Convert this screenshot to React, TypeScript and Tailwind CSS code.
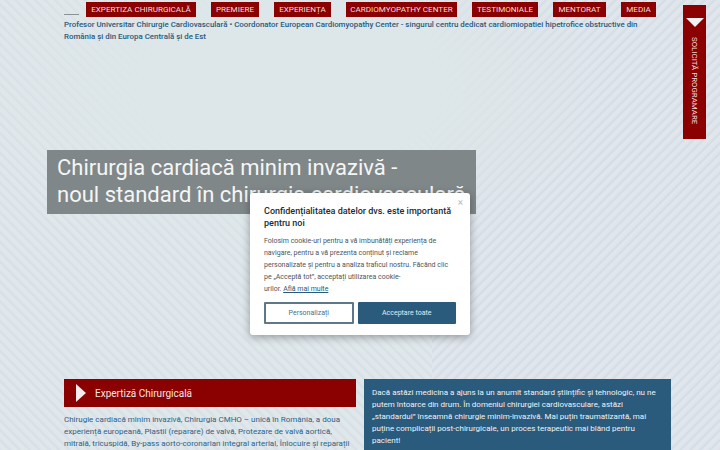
const navItems = [
  { label: "EXPERTIZA CHIRURGICALĂ", width: "w-[110px]" },
  { label: "PREMIERE", width: "w-[48px]" },
  { label: "EXPERIENȚA", width: "w-[57px]" },
  { label: "CARDIOMYOPATHY CENTER", width: "w-[111px]" },
  { label: "TESTIMONIALE", width: "w-[66px]" },
  { label: "MENTORAT", width: "w-[53px]" },
  { label: "MEDIA", width: "w-[35px]" },
];

const App = () => {
  return (
    <div className="relative h-[450px] w-[720px] overflow-hidden bg-[#dde6e9] bg-[radial-gradient(ellipse_320px_170px_at_290px_85px,#dde6e9_45%,transparent_100%),repeating-linear-gradient(45deg,#d5dfe6_0px,#dfe7eb_2px,#e1e8eb_5px,#d5dfe6_7px),repeating-linear-gradient(-45deg,#d3dce5_0px,#dfe5eb_2px,#e1e7ec_5px,#d3dce5_7px)] bg-[length:100%_100%,60%_100%,40%_100%] bg-no-repeat [background-position:left_top,left_top,right_top] font-['Roboto',sans-serif]">
      <header className="pl-[64px] pt-[2px]">
        <div className="flex items-center">
          <div className="mr-[7px] mt-[10px] h-[1px] w-[15px] bg-[#8a9298]" />
          <nav className="flex gap-[15px]">
            {navItems.map((item) => (
              <a
                key={item.label}
                className={`${item.width} flex h-[15px] items-center justify-center whitespace-nowrap bg-[#8b0000] text-[8.1px] text-[#f3dede]`}
              >
                {item.label}
              </a>
            ))}
          </nav>
        </div>
        <p className="mt-[2px] w-[590px] text-[7.9px] font-medium leading-[12px] text-[#2a5a7c]">
          Profesor Universitar Chirurgie Cardiovasculară • Coordonator European Cardiomyopathy Center - singurul centru dedicat cardiomiopatiei hipetrofice obstructive din România și din Europa Centrală și de Est
        </p>
      </header>

      <section className="ml-[47px] mt-[107px] h-[64px] w-[429px] bg-[#808788] px-[10px] pt-[4px] text-[22px] leading-[27px] text-[#f4f6f6]">
        <h1 className="whitespace-nowrap">
          Chirurgia cardiacă minim invazivă -<br />
          noul standard în chirurgia cardiovasculară
        </h1>
      </section>

      <main className="mt-[165px] flex pl-[64px]">
        <div className="w-[292px]">
          <div className="flex h-[28px] items-center bg-[#8b0000] pl-[12px]">
            <div className="h-0 w-0 border-y-[9px] border-l-[10px] border-y-transparent border-l-[#f6ecec]" />
            <h2 className="ml-[9px] text-[10px] text-[#f6e6e6]">Expertiză Chirurgicală</h2>
          </div>
          <p className="mt-[7px] w-[290px] text-[8px] leading-[12px] text-[#2f6285]">
            Chirugie cardiacă minim invazivă, Chirurgia CMHO – unică în România, a doua experiență europeană, Plastii (reparare) de valvă, Protezare de valvă aortică, mitrală, tricuspidă, By-pass aorto-coronarian integral arterial, Înlocuire și reparații
          </p>
        </div>
        <div className="ml-[8px] h-[71px] w-[307px] bg-[#2a5a7c] px-[8px] pt-[8px] text-[8px] leading-[12px] text-[#eef3f6]">
          Dacă astăzi medicina a ajuns la un anumit standard științific și tehnologic, nu ne putem întoarce din drum. În domeniul chirurgiei cardiovasculare, astăzi „standardul” înseamnă chirurgie minim-invazivă. Mai puțin traumatizantă, mai puține complicații post-chirurgicale, un proces terapeutic mai blând pentru pacient!
        </div>
      </main>

      <aside className="absolute left-[683px] top-[5px] flex h-[134px] w-[23px] flex-col items-center bg-[#8b0000]">
        <div className="mt-[13px] h-0 w-0 border-x-[9px] border-t-[9px] border-x-transparent border-t-[#f2f2f2]" />
        <span className="mt-[10px] whitespace-nowrap text-[7.9px] leading-none text-[#f3dede] [writing-mode:vertical-rl]">
          SOLICITĂ PROGRAMARE
        </span>
      </aside>

      <div className="absolute left-[250px] top-[193px] h-[142px] w-[220px] rounded-[3px] bg-white px-[14px] pt-[12px] shadow-[0_2px_8px_rgba(0,0,0,0.35)]">
        <button className="absolute right-[7px] top-[4px] text-[10px] leading-[12px] text-[#b5bcc2]">×</button>
        <h3 className="text-[9px] font-medium leading-[12px] text-[#202b33]">
          Confidențialitatea datelor dvs. este importantă pentru noi
        </h3>
        <p className="mt-[6px] text-[7px] leading-[12px] text-[#4a5660]">
          Folosim cookie-uri pentru a vă îmbunătăți experiența de navigare, pentru a vă prezenta conținut și reclame personalizate și pentru a analiza traficul nostru. Făcând clic pe „Acceptă tot”, acceptați utilizarea cookie-
          <br />
          urilor. <a className="text-[#2a5a7c] underline">Află mai multe</a>
        </p>
        <div className="mt-[7px] flex gap-[4px]">
          <button className="h-[22px] w-[90px] rounded-[1px] border-2 border-[#5d7889] bg-white text-[7px] text-[#4e7089]">Personalizați</button>
          <button className="h-[22px] w-[99px] rounded-[1px] bg-[#2a5a7c] text-[7px] text-[#e3ebf0]">Acceptare toate</button>
        </div>
      </div>
    </div>
  );
};

export default App;
